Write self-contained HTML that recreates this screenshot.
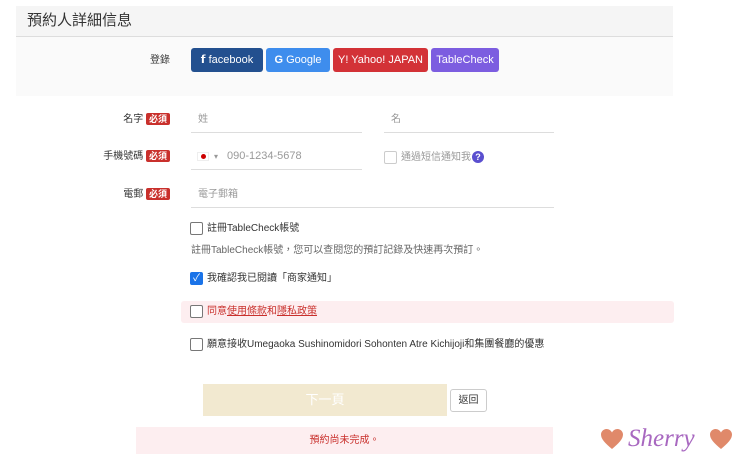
<!DOCTYPE html>
<html><head><meta charset="utf-8"><style>
*{box-sizing:border-box;margin:0;padding:0}
body{width:740px;height:461px;background:#fff;position:relative;font-family:"Liberation Sans","Noto Sans CJK TC",sans-serif;overflow:hidden;color:#333}
.a{position:absolute;line-height:13px}
.hdr{left:16px;top:6px;width:657px;height:31px;background:#f5f5f5;border-bottom:1px solid #ddd;font-size:15px;padding:7px 0 0 11px;color:#333;line-height:16px}
.gray{left:16px;top:37px;width:657px;height:59px;background:#fafafa}
.btn{top:48px;height:24px;border-radius:3px;color:#fff;font-size:11px;text-align:center;line-height:24px}
.lbl{font-size:10px;color:#333;text-align:right}
.req{background:#c9302c;color:#fff;font-size:9px;padding:1px 3px;border-radius:2px;font-weight:bold}
.inp{height:1px;background:#ddd}
.ph{font-size:10px;color:#999}
.cb{width:13px;height:13px;border:1px solid #777;border-radius:2px;background:#fff}
.t{font-size:10px;color:#333}
</style></head><body>
<div class="a hdr">預約人詳細信息</div>
<div class="a gray"></div>
<div class="a lbl" style="left:140px;top:54px;width:30px">登錄</div>
<div class="a btn" style="left:191px;width:72px;background:#23508f">𝗳 facebook</div>
<div class="a btn" style="left:266px;width:64px;background:#3e8ded"><b>G</b> Google</div>
<div class="a btn" style="left:333px;width:95px;background:#d33237">Y! Yahoo! JAPAN</div>
<div class="a btn" style="left:431px;width:68px;background:#7c5de0">TableCheck</div>

<div class="a lbl" style="left:100px;top:113px;width:70px">名字 <span class="req">必須</span></div>
<div class="a ph" style="left:198px;top:113px">姓</div>
<div class="a inp" style="left:191px;top:132px;width:171px"></div>
<div class="a ph" style="left:391px;top:113px">名</div>
<div class="a inp" style="left:384px;top:132px;width:170px"></div>

<div class="a lbl" style="left:80px;top:150px;width:90px">手機號碼 <span class="req">必須</span></div>
<div class="a" style="left:197px;top:152px;width:12px;height:9px;background:#fff;border:1px solid #eee"><div style="width:5px;height:5px;border-radius:50%;background:#c00;margin:1px 3px"></div></div>
<div class="a ph" style="left:214px;top:150px;font-size:8px">▾</div>
<div class="a ph" style="left:227px;top:150px;font-size:11px">090-1234-5678</div>
<div class="a inp" style="left:191px;top:169px;width:171px"></div>
<div class="a cb" style="left:384px;top:151px;border-color:#ccc"></div>
<div class="a ph" style="left:401px;top:151px">通過短信通知我</div>
<div class="a" style="left:472px;top:151px;width:12px;height:12px;border-radius:50%;background:#5a4fcf;color:#fff;font-size:9px;text-align:center;line-height:12px;font-weight:bold">?</div>

<div class="a lbl" style="left:100px;top:188px;width:70px">電郵 <span class="req">必須</span></div>
<div class="a ph" style="left:198px;top:188px">電子郵箱</div>
<div class="a inp" style="left:191px;top:207px;width:363px"></div>

<div class="a cb" style="left:190px;top:222px"></div>
<div class="a t" style="left:207px;top:222px">註冊TableCheck帳號</div>
<div class="a t" style="left:191px;top:244px;color:#666">註冊TableCheck帳號，您可以查閱您的預訂記錄及快速再次預訂。</div>
<div class="a cb" style="left:190px;top:272px;background:#1a73e8;border-color:#1a73e8;color:#fff;font-size:10px;line-height:11px;text-align:center">✓</div>
<div class="a t" style="left:207px;top:272px">我確認我已閱讀「商家通知」</div>
<div class="a" style="left:181px;top:301px;width:493px;height:22px;background:#fdeef0;border-radius:3px"></div>
<div class="a cb" style="left:190px;top:305px"></div>
<div class="a t" style="left:207px;top:305px;color:#c9302c">同意<u>使用條款</u>和<u>隱私政策</u></div>
<div class="a cb" style="left:190px;top:338px"></div>
<div class="a t" style="left:207px;top:338px">願意接收Umegaoka Sushinomidori Sohonten Atre Kichijoji和集團餐廳的優惠</div>

<div class="a" style="left:203px;top:384px;width:244px;height:32px;background:#f2e9d0;color:#fff;font-size:13px;text-align:center;line-height:32px">下一頁</div>
<div class="a" style="left:450px;top:389px;width:37px;height:23px;border:1px solid #ccc;border-radius:3px;font-size:10px;text-align:center;line-height:21px">返回</div>
<div class="a" style="left:136px;top:427px;width:417px;height:27px;background:#fdeef0;color:#c9302c;font-size:10px;text-align:center;line-height:27px">預約尚未完成。</div>
<svg class="a" style="left:601px;top:429px" width="22" height="21" viewBox="0 0 22 21"><path d="M11 20 C4 14 0 10 0 5.5 C0 2.5 2.5 0 5.5 0 C8 0 10 1.5 11 3.5 C12 1.5 14 0 16.5 0 C19.5 0 22 2.5 22 5.5 C22 10 18 14 11 20Z" fill="#e0896a"/></svg>
<div class="a" style="left:628px;top:425px;font-size:25px;line-height:28px;color:#a868c0;font-style:italic;font-family:'Liberation Serif',serif">Sherry</div>
<svg class="a" style="left:710px;top:429px" width="22" height="21" viewBox="0 0 22 21"><path d="M11 20 C4 14 0 10 0 5.5 C0 2.5 2.5 0 5.5 0 C8 0 10 1.5 11 3.5 C12 1.5 14 0 16.5 0 C19.5 0 22 2.5 22 5.5 C22 10 18 14 11 20Z" fill="#e0896a"/></svg>
</body></html>
